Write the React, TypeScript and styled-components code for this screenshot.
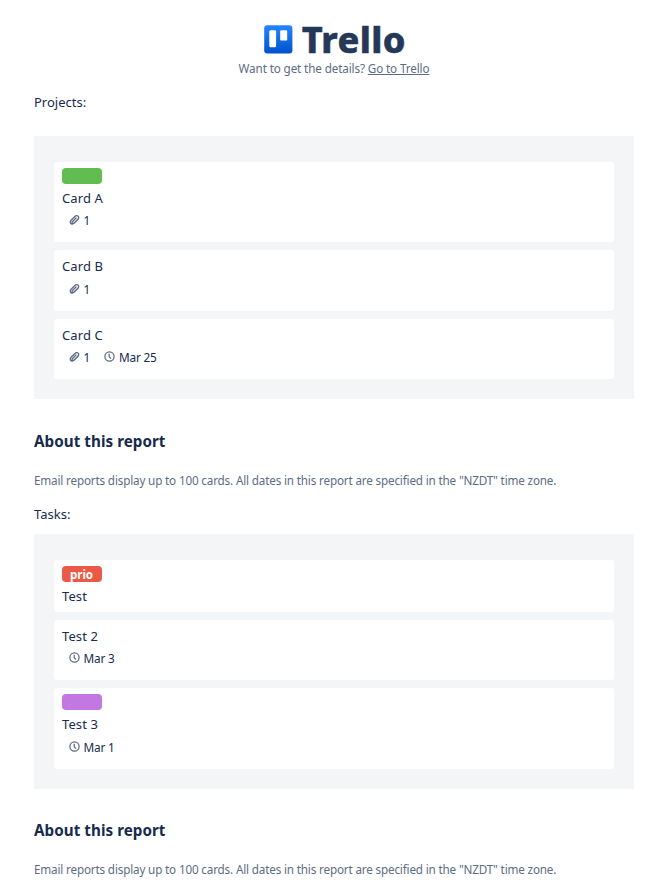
import React from "react";
import styled, { createGlobalStyle } from "styled-components";

const GlobalStyle = createGlobalStyle`
  * { box-sizing: border-box; }
  body {
    margin: 0;
    background: #fff;
    color: #172b4d;
    font-family: "Noto Sans", "Open Sans", sans-serif;
    font-size: 13px;
  }
`;

const Page = styled.main`
  width: 600px;
  height: 888px;
  margin: 0 0 0 34px;
  overflow: hidden;
`;

const Header = styled.header`
  display: flex;
  flex-direction: column;
  align-items: center;
  padding-top: 20px;
`;

const Brand = styled.div`
  display: flex;
  align-items: center;
  gap: 9px;
  height: 39px;
  padding-left: 1.5px;
`;

const Wordmark = styled.span`
  color: #253858;
  font-family: "Noto Sans", sans-serif;
  font-size: 36px;
  font-weight: 800;
  line-height: 39px;
  letter-spacing: 0.4px;
  -webkit-text-stroke: 0.5px #253858;
`;

const Details = styled.p`
  margin: 0;
  padding-bottom: 2px;
  color: #5e6c84;
  font-size: 11.7px;
  line-height: 18px;
  letter-spacing: -0.13px;
  white-space: nowrap;
`;

const DetailsLink = styled.a`
  color: #5e6c84;
  text-decoration: underline;
`;

const SectionLabel = styled.p<{ $gap: number }>`
  margin: 0 0 ${(p) => p.$gap}px;
  line-height: 20px;
`;

const Board = styled.section`
  display: flex;
  flex-direction: column;
  gap: 8px;
  padding: 26px 20px 20px;
  background: #f4f5f7;
`;

const CardBox = styled.article`
  padding: 6px 8px;
  border-radius: 3px;
  background: #fff;
`;

const Label = styled.div<{ $color: string }>`
  width: 40px;
  height: 16px;
  margin-bottom: 4px;
  padding: 0 8px;
  border-radius: 4px;
  background: ${(p) => p.$color};
  color: #fff;
  font-size: 11.5px;
  font-weight: 700;
  line-height: 17px;
  overflow: hidden;
`;

const CardTitle = styled.div`
  height: 20px;
  line-height: 20px;
  letter-spacing: 0.1px;
`;

const Badges = styled.div`
  display: flex;
  gap: 14px;
  height: 28.4px;
  padding: 2.4px 0 0 6.5px;
`;

const Badge = styled.span`
  display: flex;
  align-items: center;
  gap: 4px;
  height: 20px;
  font-size: 11.8px;
  line-height: 20px;
  letter-spacing: -0.2px;
`;

const Heading = styled.h2`
  margin: 31.5px 0 20px;
  font-size: 15.2px;
  font-weight: 700;
  line-height: 20px;
  letter-spacing: 0.05px;
`;

const Note = styled.p`
  margin: 0;
  padding-bottom: 2px;
  color: #5e6c84;
  font-size: 11.7px;
  line-height: 18px;
  letter-spacing: -0.165px;
  white-space: nowrap;
`;

const TaskSection = styled.div`
  margin-top: 13.3px;
`;

const ProjectSection = styled.div`
  margin-top: 13px;
`;

const TrelloMark = () => (
  <svg width="29" height="29" viewBox="0 0 29 29">
    <defs>
      <linearGradient id="mark" x1="0" y1="0" x2="0" y2="1">
        <stop offset="0" stopColor="#2684ff" />
        <stop offset="1" stopColor="#0052cc" />
      </linearGradient>
    </defs>
    <rect x="0.2" y="0.2" width="28.2" height="28.2" rx="3.2" fill="url(#mark)" />
    <rect x="5.3" y="5.3" width="6.8" height="17" rx="1.2" fill="#fff" />
    <rect x="16.2" y="5.3" width="7" height="10.3" rx="1.2" fill="#fff" />
  </svg>
);

const ClipIcon = () => (
  <svg width="11" height="12" viewBox="0 0 11 12" fill="none" stroke="#5e6c84" strokeWidth="1.3" strokeLinecap="round">
    <path d="M9.1 5.3 5.3 9.1C3.9 10.5 2.1 10.2 1.5 9.1 1 8.1 1.3 7.1 2.1 6.3L5.9 2.5C6.9 1.5 8.3 1.3 9.2 2.2 10 3 9.8 4.3 8.9 5.2L5.1 9C4.5 9.6 3.7 9.6 3.3 9.1 2.9 8.6 3 8 3.5 7.5L7 4" />
  </svg>
);

const ClockIcon = () => (
  <svg width="11" height="12" viewBox="0 0 11 12" fill="none" stroke="#5e6c84" strokeWidth="1.25">
    <circle cx="5.5" cy="5.5" r="4.6" />
    <path d="M5.2 2.8v3l1.8 1.8" />
  </svg>
);

type CardData = {
  title: string;
  label?: { color: string; text?: string };
  attachments?: number;
  due?: string;
};

const projects: CardData[] = [
  { title: "Card A", label: { color: "#61bd4f" }, attachments: 1 },
  { title: "Card B", attachments: 1 },
  { title: "Card C", attachments: 1, due: "Mar 25" },
];

const tasks: CardData[] = [
  { title: "Test", label: { color: "#eb5a46", text: "prio" } },
  { title: "Test 2", due: "Mar 3" },
  { title: "Test 3", label: { color: "#c377e0" }, due: "Mar 1" },
];

const Card = ({ title, label, attachments, due }: CardData) => (
  <CardBox>
    {label && <Label $color={label.color}>{label.text}</Label>}
    <CardTitle>{title}</CardTitle>
    {(attachments || due) && (
      <Badges>
        {attachments && <Badge><ClipIcon />{attachments}</Badge>}
        {due && <Badge><ClockIcon />{due}</Badge>}
      </Badges>
    )}
  </CardBox>
);

const About = () => (
  <>
    <Heading>About this report</Heading>
    <Note>
      Email reports display up to 100 cards. All dates in this report are specified in the "NZDT" time zone.
    </Note>
  </>
);

export default function App() {
  return (
    <>
      <GlobalStyle />
      <Page>
        <Header>
          <Brand>
            <TrelloMark />
            <Wordmark>Trello</Wordmark>
          </Brand>
          <Details>
            Want to get the details? <DetailsLink>Go to Trello</DetailsLink>
          </Details>
        </Header>
        <ProjectSection>
          <SectionLabel $gap={24}>Projects:</SectionLabel>
          <Board>{projects.map((c) => <Card key={c.title} {...c} />)}</Board>
          <About />
        </ProjectSection>
        <TaskSection>
          <SectionLabel $gap={10}>Tasks:</SectionLabel>
          <Board>{tasks.map((c) => <Card key={c.title} {...c} />)}</Board>
          <About />
        </TaskSection>
      </Page>
    </>
  );
}
